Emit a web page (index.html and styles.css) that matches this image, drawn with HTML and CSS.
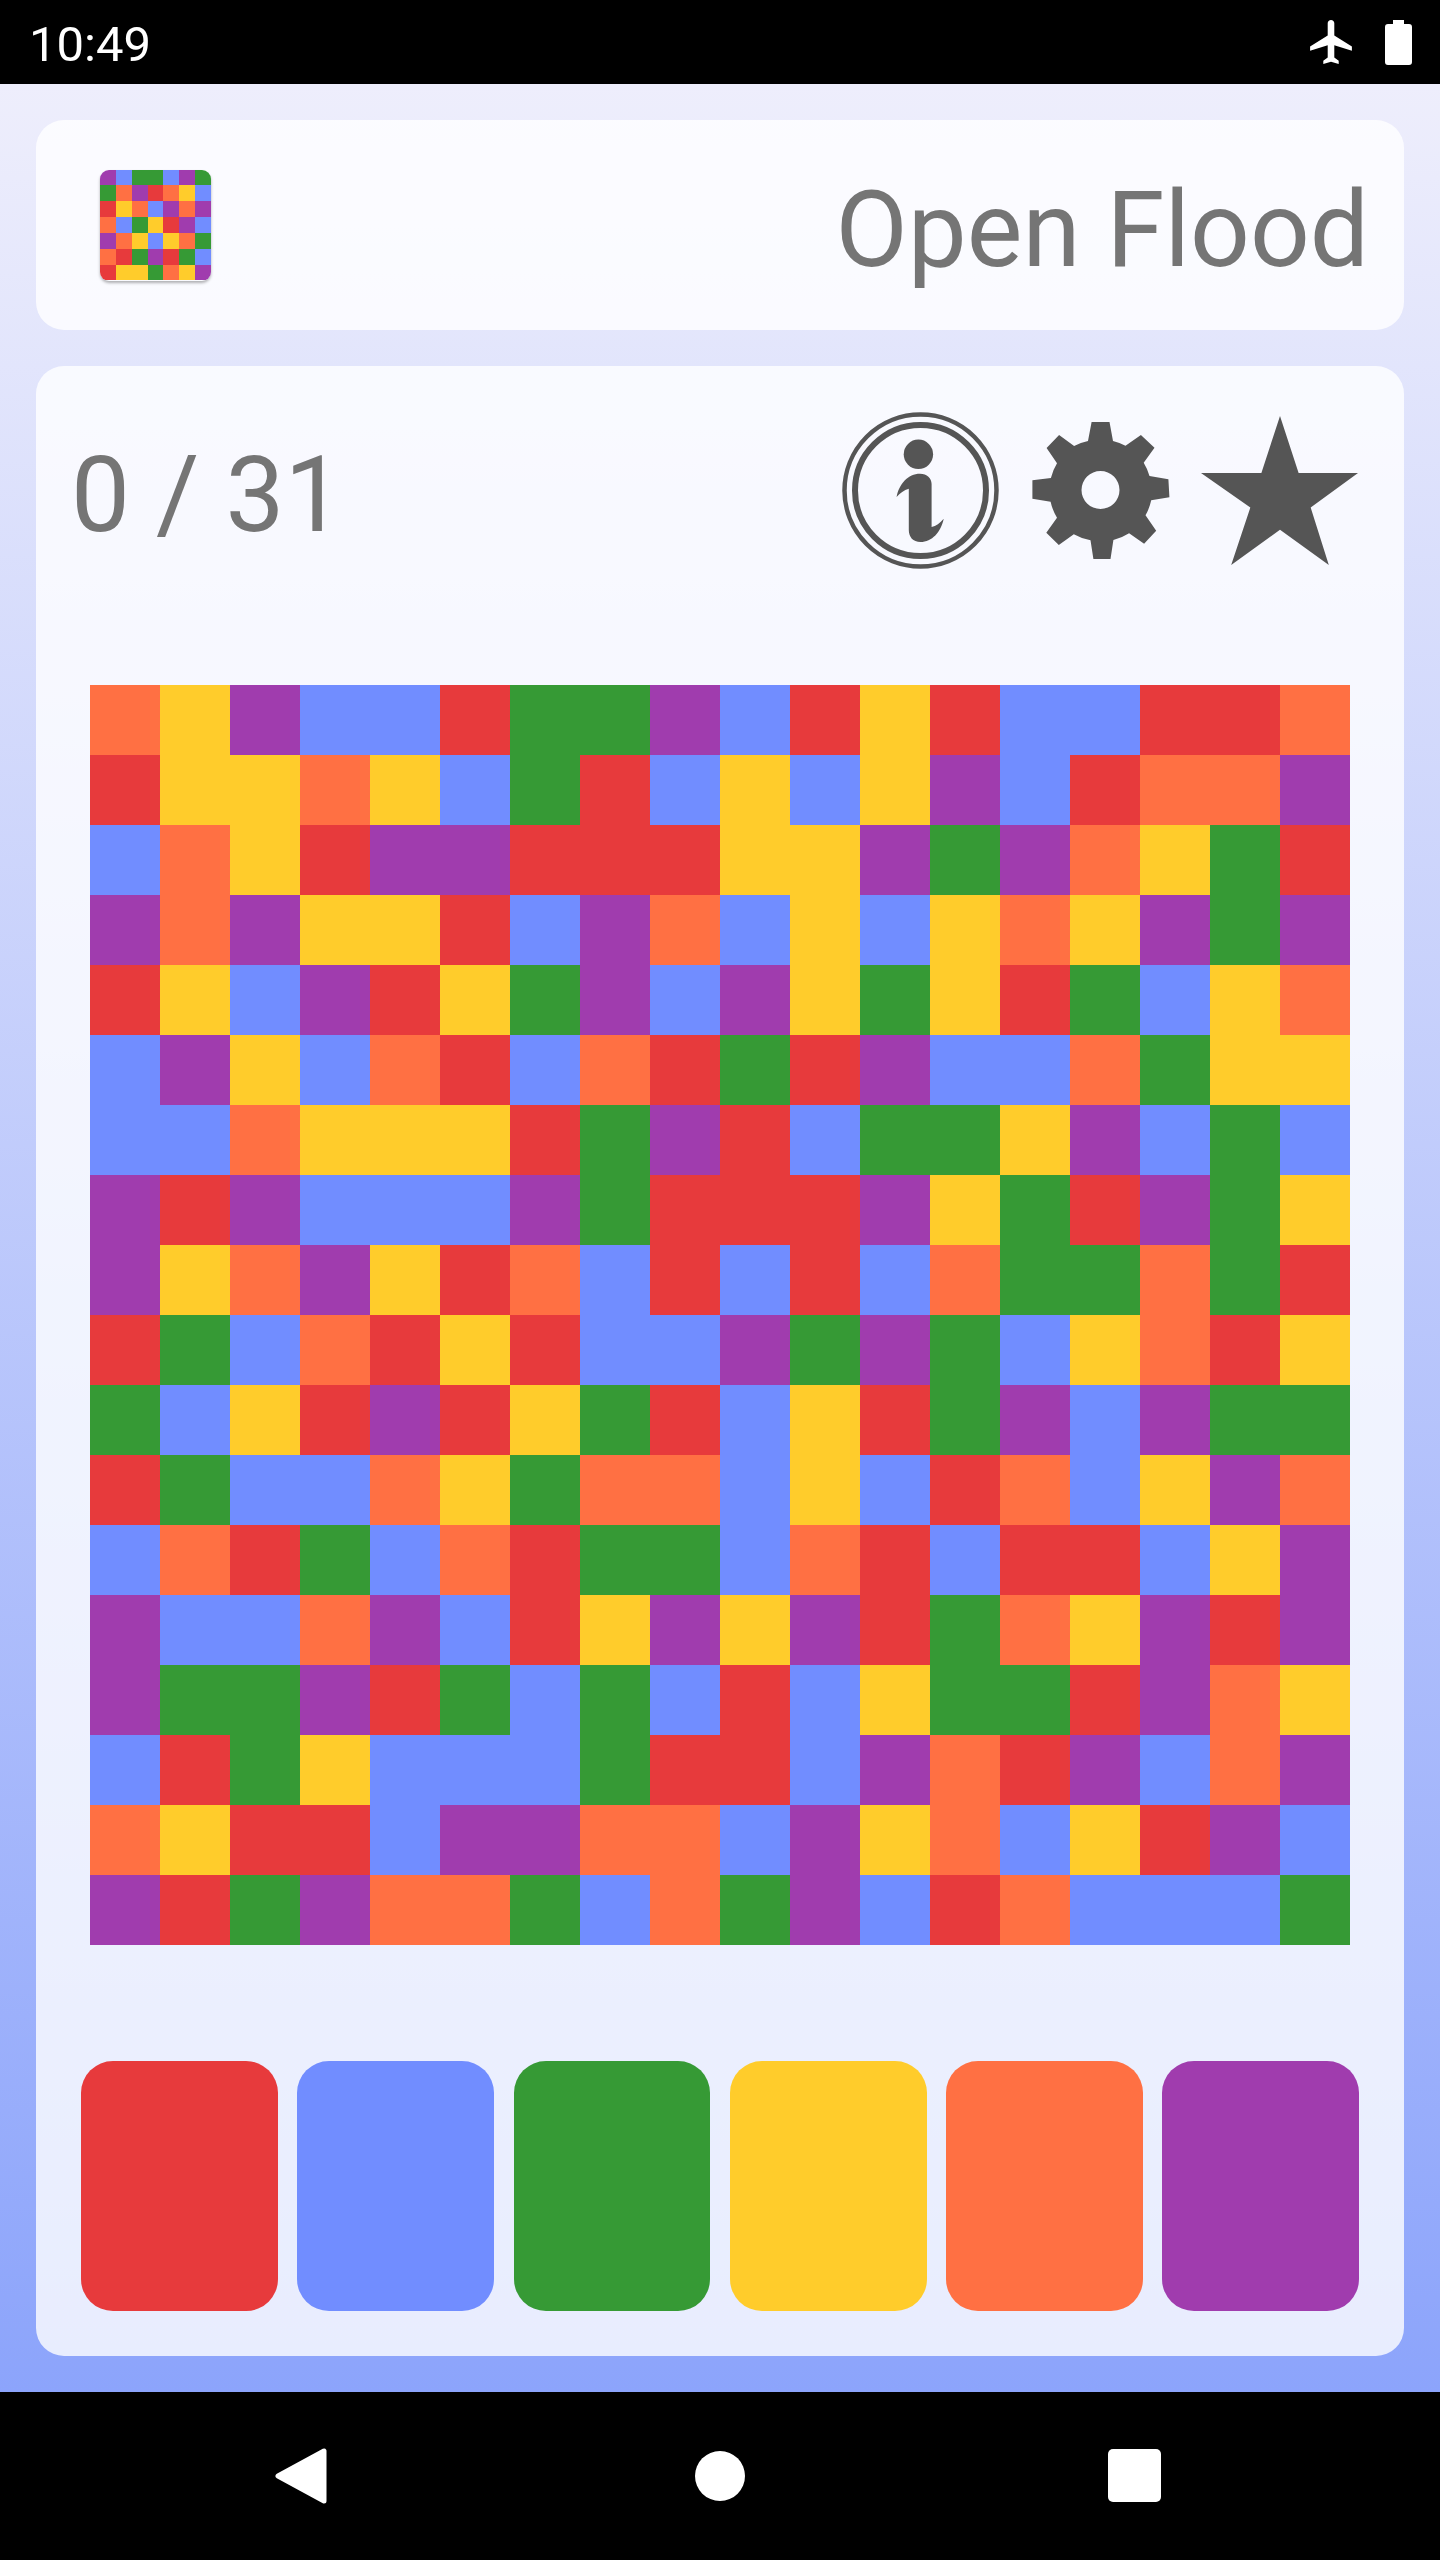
FILE: index.html
```html
<!DOCTYPE html>
<html lang="en">
<head>
    <meta charset="UTF-8">
    <meta name="viewport" content="width=device-width, initial-scale=1.0">
    <title>Open Flood</title>
    <link rel="stylesheet" href="styles.css">
</head>
<body>
    <div class="status-bar">
        <span class="clock">10:49</span>
        <div class="status-icons">
            <svg class="plane" viewBox="2 2 19 20"><path d="M21 16v-2l-8-5V3.5c0-.83-.67-1.5-1.5-1.5S10 2.67 10 3.5V9l-8 5v2l8-2.5V19l-2 1.5V22l3.5-1 3.5 1v-1.5L13 19v-5.5l8 2.5z"/></svg>
            <svg class="battery" viewBox="0 0 27 45"><path d="M8 0h11v4h5a3 3 0 0 1 3 3v35a3 3 0 0 1-3 3H3a3 3 0 0 1-3-3V7a3 3 0 0 1 3-3h5z"/></svg>
        </div>
    </div>

    <main class="app">
        <header class="card title-card">
            <div class="logo" id="logo"></div>
            <h1 class="app-title">Open Flood</h1>
        </header>

        <section class="card game-card">
            <div class="toolbar">
                <span class="counter">0 / 31</span>
                <div class="tools">
                    <svg class="icon-info" viewBox="0 0 157 157">
                        <circle class="ring-outer" cx="78.5" cy="78.5" r="76"/>
                        <circle class="ring-inner" cx="78.5" cy="78.5" r="65.5"/>
                        <circle cx="76.4" cy="42.3" r="14.7"/>
                        <path d="M54.6 85C57 72 66 61.7 78 61.7c7 0 11.6 4.3 11.6 10.3v43c4.4-1 8.4-4 12.1-8.3C99 120 90 130 78.5 130c-7.5 0-11.7-5-11.7-12V76.7C62 78 58 81 54.6 85z"/>
                    </svg>
                    <svg class="icon-gear" viewBox="0 0 138 140">
                        <path fill-rule="evenodd" d="M59.6 1H77.5L81 20A52 52 0 0 1 93.5 24.7L108.9 14L122.5 26.7L111.7 41.7A52 52 0 0 1 117.5 55L136.4 58.3L137.4 76.3L119.2 79.3A52 52 0 0 1 113.5 94.3L124.2 109.7L112.1 122.7L97.1 112.3A52 52 0 0 1 81.4 119L78.5 138H61.4L58.5 119.3A52 52 0 0 1 41.8 113.3L26.8 124L14.3 111.7L25 96.7A52 52 0 0 1 18.6 80.7L.4 77.7V59.3L18.9 57A52 52 0 0 1 25 42.3L14.6 27L27.1 14L42.1 25A52 52 0 0 1 56 20zM68.5 50a19 19 0 1 0 0 38a19 19 0 1 0 0-38z"/>
                    </svg>
                    <svg class="icon-star" viewBox="0 0 156 148">
                        <polygon points="78.5,0 97,56.5 156,56.5 109,91 127,148 78.5,113 30,148 49,91 0,56.5 60,56.5"/>
                    </svg>
                </div>
            </div>

            <div class="board" id="board"></div>

            <div class="color-buttons">
                <button class="color-btn red" aria-label="Red"></button>
                <button class="color-btn blue" aria-label="Blue"></button>
                <button class="color-btn green" aria-label="Green"></button>
                <button class="color-btn yellow" aria-label="Yellow"></button>
                <button class="color-btn orange" aria-label="Orange"></button>
                <button class="color-btn purple" aria-label="Purple"></button>
            </div>
        </section>
    </main>

    <div class="nav-bar">
        <svg class="nav-back" viewBox="0 0 52 56"><polygon points="49,3 49,53 3,28"/></svg>
        <span class="nav-home"></span>
        <span class="nav-recent"></span>
    </div>

    <script src="script.js"></script>
</body>
</html>
```

FILE: styles.css
```css
* {
    box-sizing: border-box;
}
body {
    margin: 0;
    width: 1440px;
    height: 2560px;
    display: flex;
    flex-direction: column;
    font-family: Roboto, "Liberation Sans", sans-serif;
    background-color: black;
}

/* status bar */
.status-bar {
    height: 84px;
    flex: none;
    display: flex;
    align-items: center;
    justify-content: space-between;
    padding: 0 28px 0 29px;
    background-color: black;
    color: white;
}
.clock {
    padding-top: 4px;
    font-size: 49px;
    font-weight: 400;
}
.status-icons {
    display: flex;
    align-items: center;
    gap: 33px;
}
.status-icons svg {
    display: block;
    fill: white;
}
.plane {
    width: 42px;
    height: 44px;
}
.battery {
    width: 27px;
    height: 45px;
}

/* main area */
.app {
    flex: 1;
    display: flex;
    flex-direction: column;
    gap: 36px;
    padding: 36px;
    background: linear-gradient(#eeeefc, #8ca4fb);
}
.card {
    background-color: rgba(255, 255, 255, 0.8);
    border-radius: 28px;
}
.title-card {
    height: 210px;
    display: flex;
    align-items: center;
    justify-content: space-between;
    padding: 0 35px 0 64px;
}
.logo {
    width: 111px;
    height: 111px;
    display: grid;
    grid-template-columns: repeat(7, 1fr);
    grid-template-rows: repeat(7, 1fr);
    border-radius: 9px;
    overflow: hidden;
    box-shadow: 0 2px 3px rgba(0, 0, 0, 0.3);
}
.app-title {
    margin: 0;
    padding-top: 10px;
    font-size: 105px;
    font-weight: 400;
    color: #757575;
}
.game-card {
    flex: 1;
    padding: 46px 45px 44px 35px;
    display: flex;
    flex-direction: column;
}
.toolbar {
    display: flex;
    align-items: center;
    justify-content: space-between;
    height: 157px;
    padding-right: 1px;
}
.counter {
    padding-top: 10px;
    font-size: 105px;
    color: #757575;
}
.tools {
    display: flex;
    align-items: center;
    gap: 31px;
}
.tools svg {
    display: block;
    fill: #555555;
}
.icon-info {
    width: 157px;
    height: 157px;
    margin-right: 2px;
}
.ring-outer {
    fill: none;
    stroke: #555555;
    stroke-width: 4.5;
}
.ring-inner {
    fill: none;
    stroke: #555555;
    stroke-width: 6;
}
.icon-gear {
    width: 138px;
    height: 140px;
}
.icon-star {
    width: 157px;
    height: 149px;
    margin-bottom: 1px;
}

/* board */
.board {
    width: 1260px;
    height: 1260px;
    margin: 116px 0 116px 19px;
    display: grid;
    grid-template-columns: repeat(18, 70px);
    grid-template-rows: repeat(18, 70px);
}
.color-buttons {
    display: flex;
    gap: 19.5px;
    margin-left: 10px;
}
.color-btn {
    flex: 1;
    height: 250px;
    padding: 0;
    border: none;
    border-radius: 32px;
}

/* game colours */
.red {
    background-color: #e73a3c;
}
.blue {
    background-color: #718dff;
}
.green {
    background-color: #369a35;
}
.yellow {
    background-color: #ffcc2b;
}
.orange {
    background-color: #ff7043;
}
.purple {
    background-color: #a03cae;
}

/* nav bar */
.nav-bar {
    height: 168px;
    flex: none;
    position: relative;
    background-color: black;
}
.nav-back {
    position: absolute;
    left: 275px;
    top: 56px;
    width: 52px;
    height: 56px;
    fill: white;
    stroke: white;
    stroke-width: 5;
    stroke-linejoin: round;
}
.nav-home {
    position: absolute;
    left: 695px;
    top: 59px;
    width: 50px;
    height: 50px;
    border-radius: 50%;
    background-color: white;
}
.nav-recent {
    position: absolute;
    left: 1108px;
    top: 57px;
    width: 53px;
    height: 53px;
    border-radius: 5px;
    background-color: white;
}
```

FILE: script.js
```js
const colorNames = {
    R: "red",
    B: "blue",
    G: "green",
    Y: "yellow",
    O: "orange",
    P: "purple"
};

const boardRows = [
    "OYPBBRGGPBRYRBBRRO",
    "RYYOYBGRBYBYPBROOP",
    "BOYRPPRRRYYPGPOYGR",
    "POPYYRBPOBYBYOYPGP",
    "RYBPRYGPBPYGYRGBYO",
    "BPYBORBORGRPBBOGYY",
    "BBOYYYRGPRBGGYPBGB",
    "PRPBBBPGRRRPYGRPGY",
    "PYOPYROBRBRBOGGOGR",
    "RGBORYRBBPGPGBYORY",
    "GBYRPRYGRBYRGPBPGG",
    "RGBBOYGOOBYBROBYPO",
    "BORGBORGGBORBRRBYP",
    "PBBOPBRYPYPRGOYPRP",
    "PGGPRGBGBRBYGGRPOY",
    "BRGYBBBGRRBPORPBOP",
    "OYRRBPPOOBPYOBYRPB",
    "PRGPOOGBOGPBROBBBG"
];

const logoRows = [
    "PBGGBPG",
    "GOPROYB",
    "RYOBPOP",
    "OBGYRPB",
    "POYBYOG",
    "ORGPRGB",
    "RYYGOYP"
];

function fillGrid(id, rows) {
    const grid = document.getElementById(id);
    rows.forEach(row => {
        for (const letter of row) {
            const cell = document.createElement("div");
            cell.className = colorNames[letter];
            grid.appendChild(cell);
        }
    });
}

fillGrid("board", boardRows);
fillGrid("logo", logoRows);
```
